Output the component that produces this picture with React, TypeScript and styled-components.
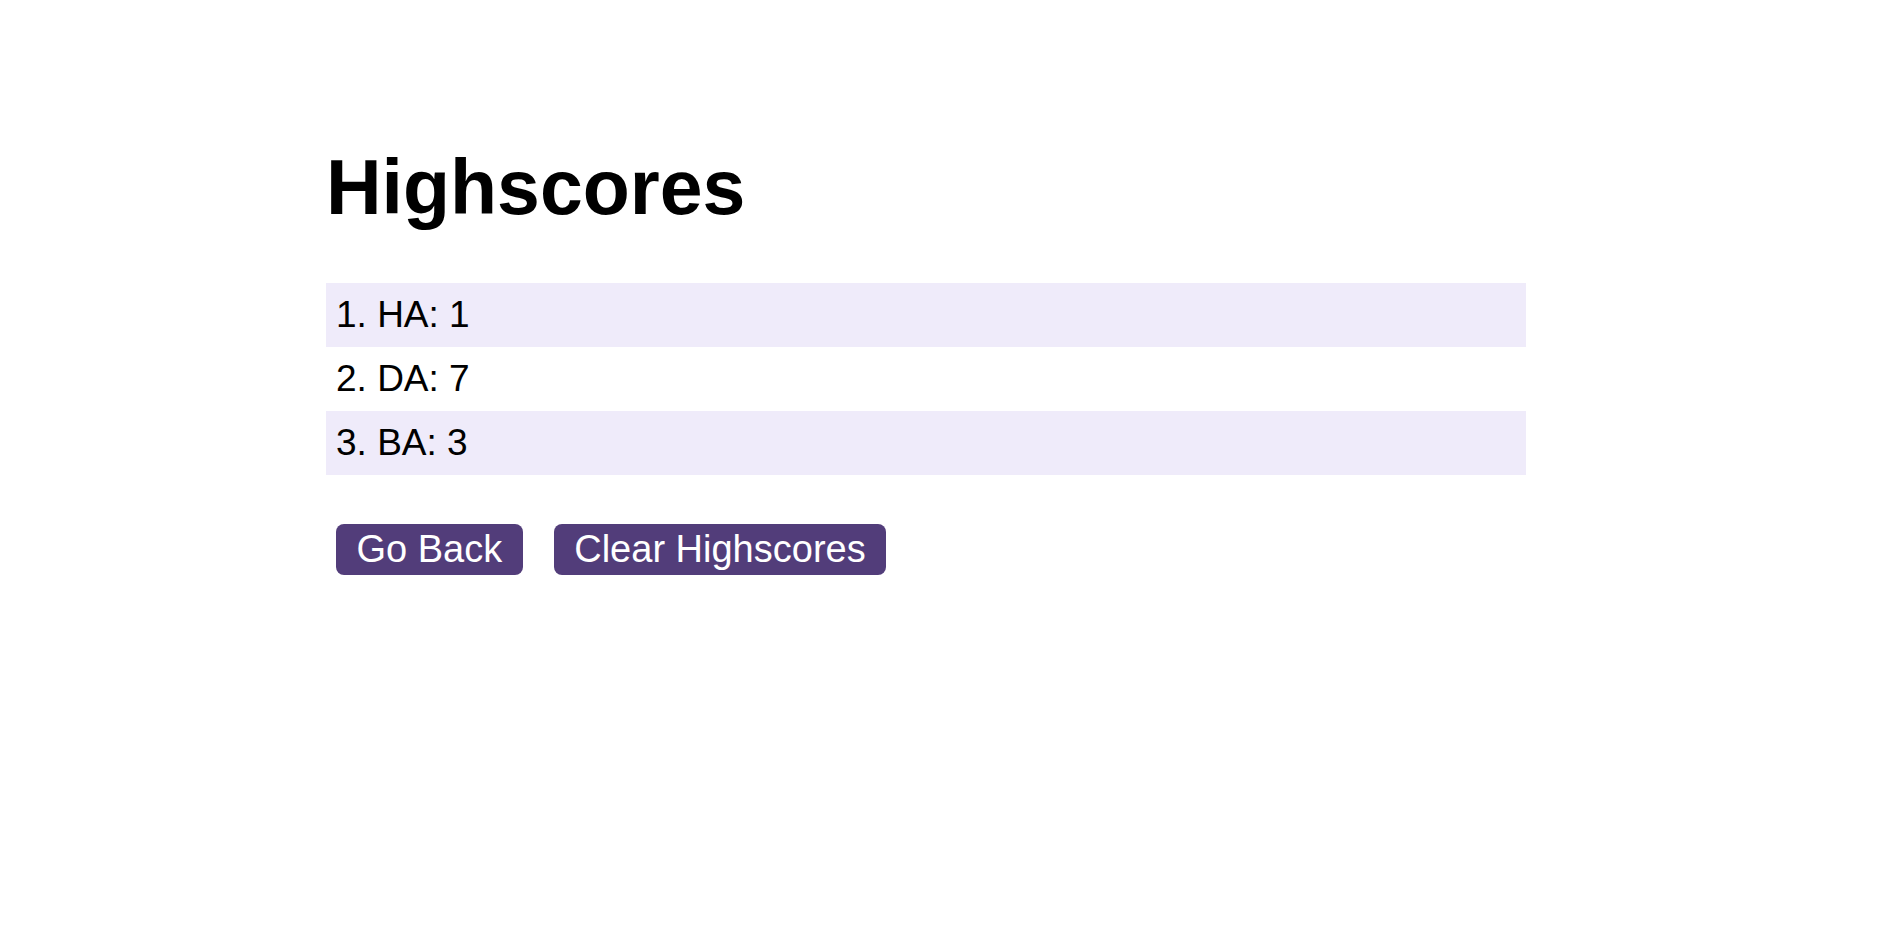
import React from "react";
import styled, { createGlobalStyle } from "styled-components";

const GlobalStyle = createGlobalStyle`
  html, body {
    margin: 0;
    padding: 0;
    background: #ffffff;
    font-family: "Liberation Sans", Arial, Helvetica, sans-serif;
    color: #000000;
  }
`;

const Page = styled.main`
  width: 1200px;
  padding: 143px 0 0 326px;
  display: flex;
  flex-direction: column;
`;

const Title = styled.h1`
  margin: 0 0 50.5px 0;
  font-size: 77px;
  font-weight: 700;
  line-height: normal;
`;

const ScoreList = styled.ol`
  list-style: none;
  margin: 0;
  padding: 0;
  display: flex;
  flex-direction: column;
`;

const ScoreRow = styled.li<{ $shaded: boolean }>`
  height: 64px;
  line-height: 64px;
  padding: 0 10px;
  font-size: 37px;
  background: ${(p) => (p.$shaded ? "#efebfa" : "transparent")};
`;

const Actions = styled.div`
  display: flex;
  gap: 31px;
  margin-top: 49px;
  padding-left: 10px;
`;

const Button = styled.button`
  height: 51px;
  line-height: 51px;
  padding: 0 20.5px;
  border: none;
  border-radius: 8px;
  background: #523d7a;
  color: #ffffff;
  font-family: "Liberation Sans", Arial, Helvetica, sans-serif;
  font-size: 38px;
  cursor: pointer;
`;

const scores = [
  { initials: "HA", score: 1 },
  { initials: "DA", score: 7 },
  { initials: "BA", score: 3 },
];

export default function App() {
  return (
    <>
      <GlobalStyle />
      <Page>
        <Title>Highscores</Title>
        <ScoreList>
          {scores.map((s, i) => (
            <ScoreRow key={i} $shaded={i % 2 === 0}>
              {i + 1}. {s.initials}: {s.score}
            </ScoreRow>
          ))}
        </ScoreList>
        <Actions>
          <Button>Go Back</Button>
          <Button>Clear Highscores</Button>
        </Actions>
      </Page>
    </>
  );
}
